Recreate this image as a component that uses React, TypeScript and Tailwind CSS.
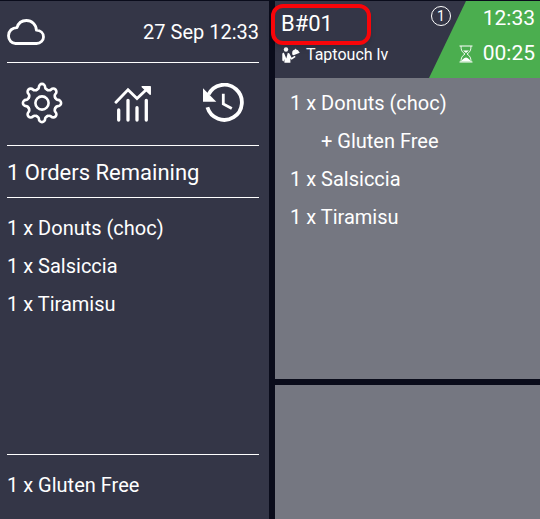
import { FC } from "react";

interface IOrderItem {
  qty: number;
  name: string;
  extras?: string[];
}

const items: IOrderItem[] = [
  { qty: 1, name: "Donuts (choc)", extras: ["Gluten Free"] },
  { qty: 1, name: "Salsiccia" },
  { qty: 1, name: "Tiramisu" },
];

const CloudIcon: FC = () => (
  <svg width="38" height="26" viewBox="0 0 38 26" fill="none" aria-hidden="true">
    <path
      d="M8.5 24.5H29.5C33.4 24.5 36.5 21.6 36.5 17.9C36.5 14.2 33.6 11.4 29.4 11.2C29.2 5.6 24.8 1.5 19.4 1.5C14.8 1.5 11.2 4.4 10 8.6C5.2 8.6 1.5 12 1.5 16.7C1.5 21.2 4.6 24.5 8.5 24.5Z"
      stroke="white"
      strokeWidth="2.8"
      strokeLinejoin="round"
    />
  </svg>
);

// one tooth, repeated around the centre
const GearIcon: FC = () => (
  <svg width="42" height="42" viewBox="-21 -21 42 42" fill="none" stroke="white" strokeWidth="2.6" strokeLinecap="round" aria-hidden="true">
    <circle r="6.6" />
    {[0, 45, 90, 135, 180, 225, 270, 315].map((angle) => (
      <path
        key={angle}
        transform={`rotate(${angle})`}
        d="M-5.4 -13.1C-4 -13.7 -3.1 -14.6 -3.1 -16A3.1 3.1 0 0 1 3.1 -16C3.1 -14.6 4 -13.7 5.4 -13.1"
      />
    ))}
  </svg>
);

const ChartIcon: FC = () => (
  <svg width="38" height="38" viewBox="0 0 38 38" fill="none" stroke="white" aria-hidden="true">
    <path d="M4.7 26V36M14 16.3V36M23 23.7V36M32.3 16.3V36" strokeWidth="3.3" strokeLinecap="round" />
    <path d="M2 18.3L14 5.8L23 14.6L32.5 5.5" strokeWidth="2.9" strokeLinecap="round" />
    <path d="M28.2 2.8H36.2V10.3Z" fill="white" strokeWidth="1.5" strokeLinejoin="round" />
  </svg>
);

const HistoryIcon: FC = () => (
  <svg width="43" height="40" viewBox="0 0 43 40" fill="none" aria-hidden="true">
    <path d="M6.5 11.5A17.6 17.6 0 1 1 5.4 24.3" stroke="white" strokeWidth="3.8" />
    <path d="M1 5.3V18.7H14.3Z" fill="white" />
    <path d="M21.3 10.8V21L29.8 25.6" stroke="white" strokeWidth="2.8" />
  </svg>
);

const WaiterIcon: FC = () => (
  <svg width="18" height="17" viewBox="0 0 18 17" fill="white" aria-hidden="true">
    <circle cx="4" cy="2.5" r="2.2" />
    <path d="M0.3 6.4L1.8 5.6L4.3 11.5L5.8 5.8L7.4 6.6L9.6 10.8L12.8 8.8L13.6 10L9.6 12.8L8.4 11.6V15.8H2.4V12L1.6 14.5L0.3 13.5Z" />
    <path d="M10.2 6.2A3.4 3.4 0 0 1 12.9 2.6L13.6 1.4L14.3 2.4A3.4 3.4 0 0 1 17 4.8L17.8 5.8L11.5 8.2L10.2 7.4Z" />
  </svg>
);

const HourglassIcon: FC = () => (
  <svg width="14" height="18" viewBox="0 0 14 18" fill="none" stroke="white" aria-hidden="true">
    <path d="M0.5 1H13.5M0.5 17H13.5" strokeWidth="1.2" />
    <path d="M2 1C2 5.5 3 7 6 9C3 11 2 12.5 2 17M12 1C12 5.5 11 7 8 9C11 11 12 12.5 12 17" strokeWidth="0.9" />
    <path d="M4 5.5H10L7 8ZM2.5 16.5C3 14.5 5 13 7 12.5C9 13 11 14.5 11.5 16.5Z" fill="white" stroke="none" />
  </svg>
);

const Sidebar: FC = () => (
  <aside className="flex flex-col bg-[#343647] pl-[7px] pr-[10px]">
    <header className="flex h-[62px] items-center justify-between border-b border-white">
      <CloudIcon />
      <time className="text-xl">27 Sep 12:33</time>
    </header>
    <nav className="flex h-[83px] items-center justify-between border-b border-white px-[14px] pb-[2px]">
      <button type="button" aria-label="Settings">
        <GearIcon />
      </button>
      <button type="button" aria-label="Statistics">
        <ChartIcon />
      </button>
      <button type="button" aria-label="History">
        <HistoryIcon />
      </button>
    </nav>
    <h1 className="flex h-[52px] items-center border-b border-white pt-[2px] text-[22px]">
      1 Orders Remaining
    </h1>
    <ul className="grow pt-[11px] text-xl leading-[38px]">
      {items.map((item) => (
        <li key={item.name}>
          {item.qty} x {item.name}
        </li>
      ))}
    </ul>
    <footer className="h-[65px] border-t border-white pt-[11px] text-xl leading-[38px]">
      1 x Gluten Free
    </footer>
  </aside>
);

const OrderCard: FC = () => (
  <article className="h-[378px] bg-[#757781]">
    <header className="flex h-[77px] bg-[#343647]">
      <div className="grow">
        <div className="flex items-start justify-between pl-[6px]">
          <h2 className="relative pt-[7px] text-[22px] leading-8">
            B#01
            <span className="absolute -left-[10px] top-[3px] h-[41px] w-[100px] rounded-xl border-4 border-[#f80509] shadow-md" />
          </h2>
          <span className="-mr-[22px] mt-[5px] flex size-5 items-center justify-center rounded-full border border-white text-sm">
            1
          </span>
        </div>
        <div className="flex items-center gap-[6px] pl-[7px] pt-[3px]">
          <WaiterIcon />
          <span className="text-base">Taptouch lv</span>
        </div>
      </div>
      <div className="flex w-[111px] flex-col items-end bg-[#4bae4f] pr-[5px] text-[21px] leading-[35px] [clip-path:polygon(37px_0,100%_0,100%_100%,0_100%)]">
        <time>12:33</time>
        <div className="flex items-center gap-[10px]">
          <HourglassIcon />
          <time>00:25</time>
        </div>
      </div>
    </header>
    <ul className="pl-[15px] pt-[6px] text-xl leading-[38px]">
      {items.map((item) => (
        <li key={item.name}>
          {item.qty} x {item.name}
          {item.extras?.map((extra) => (
            <p key={extra} className="pl-[31px]">
              + {extra}
            </p>
          ))}
        </li>
      ))}
    </ul>
  </article>
);

const App: FC = () => {
  return (
    <div className="grid min-h-screen grid-cols-[269fr_265fr] gap-[6px] bg-[#0a0c1b] pt-px font-[Roboto,sans-serif] text-white">
      <Sidebar />
      <main className="flex flex-col gap-[6px]">
        <OrderCard />
        <div className="grow bg-[#757781]" />
      </main>
    </div>
  );
};

export default App;
